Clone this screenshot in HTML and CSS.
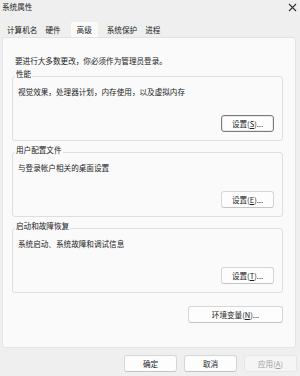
FILE: index.html
```html
<!DOCTYPE html>
<html lang="zh-CN">
  <head>
    <meta charset="UTF-8" />
    <title>系统属性</title>
    <link rel="stylesheet" href="styles.css">
  </head>
  <body>
    <div class="titlebar">
      <span class="title">系统属性</span>
      <svg class="close" width="9" height="9" viewBox="0 0 9 9">
        <path d="M1 1 L8 8 M8 1 L1 8" stroke="#333" stroke-width="1.1" fill="none" />
      </svg>
    </div>
    <div class="tabs">
      <div class="tab">计算机名</div>
      <div class="tab">硬件</div>
      <div class="tab active">高级</div>
      <div class="tab">系统保护</div>
      <div class="tab">进程</div>
    </div>
    <div class="panel">
      <p class="intro">要进行大多数更改，你必须作为管理员登录。</p>
      <fieldset class="group">
        <legend>性能</legend>
        <p class="desc">视觉效果，处理器计划，内存使用，以及虚拟内存</p>
        <div class="row"><button class="btn focused">设置(<u>S</u>)...</button></div>
      </fieldset>
      <fieldset class="group">
        <legend>用户配置文件</legend>
        <p class="desc">与登录帐户相关的桌面设置</p>
        <div class="row"><button class="btn">设置(<u>E</u>)...</button></div>
      </fieldset>
      <fieldset class="group">
        <legend>启动和故障恢复</legend>
        <p class="desc">系统启动、系统故障和调试信息</p>
        <div class="row"><button class="btn">设置(<u>T</u>)...</button></div>
      </fieldset>
      <div class="row env-row"><button class="btn env">环境变量(<u>N</u>)...</button></div>
    </div>
    <div class="footer">
      <button class="btn">确定</button>
      <button class="btn">取消</button>
      <button class="btn disabled">应用(<u>A</u>)</button>
    </div>
  </body>
</html>
```
FILE: styles.css
```css
body {
  margin: 0;
  background: #efefef;
  font-family: "Noto Sans CJK SC", "Noto Sans", sans-serif;
  font-size: 7.6px;
  line-height: 10px;
  color: #222;
}
.titlebar {
  height: 13px;
  padding: 0 3px 0 2px;
  display: flex;
  justify-content: space-between;
  align-items: center;
}
.close {
  margin-top: 2px;
}
.tabs {
  display: flex;
  height: 15px;
  margin-top: 9px;
  padding-left: 3px;
}
.tab {
  padding: 0 4px;
  line-height: 15px;
}
.tab.active {
  background: #fbfbfb;
  margin: 0 5px 0 6px;
  padding: 0 6px;
  border-radius: 2px 2px 0 0;
}
.panel {
  margin: 0 4px 0 2px;
  height: 309px;
  padding: 0 12px 0 9px;
  background: #fafafa;
  border: 1px solid #e4e4e4;
  border-radius: 0 3px 3px 3px;
}
.intro {
  margin: 18px 0 3px;
  padding-left: 3px;
}
.group {
  margin: 0 0 4px;
  padding: 4px 0 8px;
  border: 1px solid #dedede;
  border-radius: 3px;
}
.group legend {
  margin-left: 2px;
  padding: 0 1px 4px;
}
.desc {
  margin: 0;
  padding-left: 5px;
}
.row {
  display: flex;
  justify-content: flex-end;
  padding-right: 8px;
  margin-top: 18px;
}
.btn {
  font-family: inherit;
  font-size: 7.6px;
  color: #222;
  height: 17px;
  width: 53px;
  padding: 0;
  background: #fdfdfd;
  border: 1px solid #d6d6d6;
  border-bottom-color: #c4c4c4;
  border-radius: 3px;
}
.btn.focused {
  border: 1px solid #7a7a7a;
  box-shadow: inset 0 0 0 1px #e8e8e8;
}
.env-row {
  margin-top: 13px;
  padding-right: 0;
}
.btn.env {
  width: 95px;
}
.footer {
  display: flex;
  justify-content: flex-end;
  gap: 7px;
  padding: 7px 3px 0 0;
}
.btn.disabled {
  color: #a0a0a0;
  background: #f5f5f5;
  border-color: #e6e6e6;
}
```
